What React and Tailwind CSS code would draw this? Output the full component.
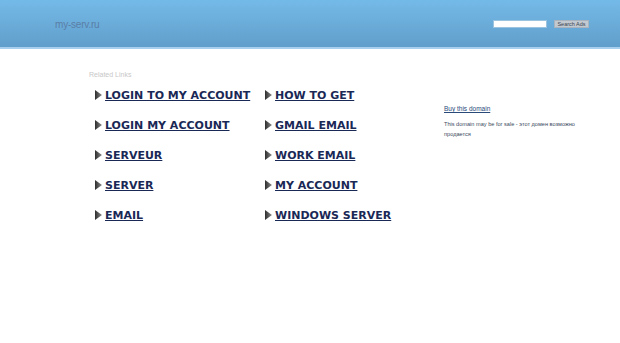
import React from "react";

const links = [
  ["LOGIN TO MY ACCOUNT", "HOW TO GET"],
  ["LOGIN MY ACCOUNT", "GMAIL EMAIL"],
  ["SERVEUR", "WORK EMAIL"],
  ["SERVER", "MY ACCOUNT"],
  ["EMAIL", "WINDOWS SERVER"],
];

function Arrow() {
  return (
    <svg width="7" height="10" viewBox="0 0 7 10" className="shrink-0">
      <defs>
        <linearGradient id="ag" x1="0" y1="0" x2="1" y2="0">
          <stop offset="0" stopColor="#2e2e2e" />
          <stop offset="1" stopColor="#8a8a8a" />
        </linearGradient>
      </defs>
      <polygon points="0,0 7,5 0,10" fill="url(#ag)" />
    </svg>
  );
}

function LinkItem({ text }) {
  return (
    <div className="flex items-center h-[30px] gap-[3px]">
      <Arrow />
      <a
        href="#"
        className="text-[11px] font-bold underline text-[#1a2856] leading-none"
        style={{ fontFamily: "'DejaVu Sans', Verdana, sans-serif" }}
      >
        {text}
      </a>
    </div>
  );
}

export default function App() {
  return (
    <div
      className="w-[620px] h-[343px] bg-white overflow-hidden"
      style={{ fontFamily: "'Liberation Sans', Arial, sans-serif" }}
    >
      <div className="h-[47px] bg-gradient-to-b from-[#74bae8] to-[#619ecb] flex items-center pl-[55px] pr-[31px]">
        <div className="text-[10px] text-[#5a7ea7] tracking-[-0.2px] mt-[1px]">my-serv.ru</div>
        <div className="ml-auto flex items-center gap-[7px] mt-[1px]">
          <div className="w-[54px] h-[8px] bg-white border border-[#9cc4e0]" />
          <div className="h-[8px] w-[35px] bg-[#c3c9d0] border border-[#a9b3bd] text-[5.5px] leading-[6px] text-[#3a4550] flex items-center justify-center">
            Search Ads
          </div>
        </div>
      </div>
      <div className="h-[2px] bg-[#a8d0ee]" />
      <div className="flex pl-[89px] pt-[22px]">
        <div className="w-[355px]">
          <div className="text-[7px] text-[#c8c8c8] leading-[8px]">Related Links</div>
          <div className="pl-[6px] pt-[1px] grid grid-cols-[170px_170px]">
            {links.map(([a, b], i) => (
              <React.Fragment key={i}>
                <LinkItem text={a} />
                <LinkItem text={b} />
              </React.Fragment>
            ))}
          </div>
        </div>
        <div className="pt-[34px] w-[132px]">
          <a href="#" className="block text-[6.5px] leading-[8px] text-[#2a4a7a] underline">
            Buy this domain
          </a>
          <div className="mt-[6px] text-[5.6px] leading-[10px] text-[#3b4a5e]">
            This domain may be for sale - этот домен возможно продается
          </div>
        </div>
      </div>
    </div>
  );
}
